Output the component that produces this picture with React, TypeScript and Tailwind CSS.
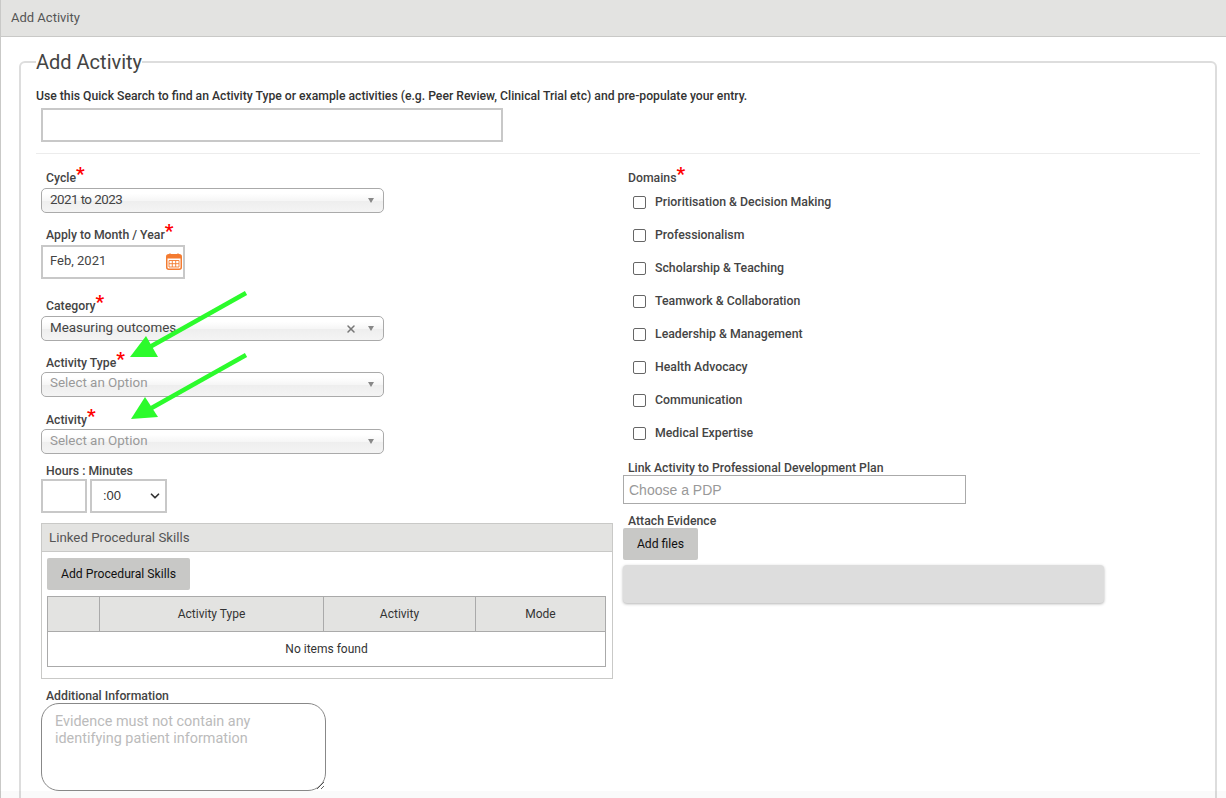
import { ChevronDown, X } from "lucide-react";

const domains = [
  "Prioritisation & Decision Making",
  "Professionalism",
  "Scholarship & Teaching",
  "Teamwork & Collaboration",
  "Leadership & Management",
  "Health Advocacy",
  "Communication",
  "Medical Expertise",
];

function Label({ text, required, className }: { text: string; required?: boolean; className?: string }) {
  return (
    <label className={`block h-[16px] text-[12.25px] leading-[16px] font-medium text-[#444] ${className ?? ""}`}>
      {text}
      {required && (
        <span className="relative top-[-2px] text-[19px] leading-[10px] font-bold text-[#f00]">*</span>
      )}
    </label>
  );
}

function Chosen({ value, placeholder, clearable, className, valueClass }: { value: string; placeholder?: boolean; clearable?: boolean; className?: string; valueClass?: string }) {
  return (
    <div
      className={`flex h-[25px] w-[343px] items-center rounded-[5px] border border-[#aaa] bg-[linear-gradient(#ffffff_20%,#f6f6f6_50%,#eeeeee_52%,#f4f4f4_100%)] pl-[8px] pr-[9px] text-[13.4px] ${placeholder ? "text-[#999]" : "text-[#444]"} ${className ?? ""}`}
    >
      <span className={`flex-1 ${valueClass ?? ""}`}>{value}</span>
      {clearable && <X size={12} strokeWidth={3} className="mr-[11px] text-[#777]" />}
      <span className="h-0 w-0 border-x-[3.5px] border-t-[5px] border-x-transparent border-t-[#888]" />
    </div>
  );
}

function CalendarIcon() {
  return (
    <svg width="16" height="17" viewBox="0 0 16 17" className="mt-[-2px] shrink-0">
      <rect x="0.75" y="1.75" width="14.5" height="14.5" rx="2" fill="#fff" stroke="#f47b30" strokeWidth="1.5" />
      <rect x="1" y="2" width="14" height="3.5" fill="#f47b30" />
      <path d="M4 0.5v3M12 0.5v3" stroke="#f47b30" strokeWidth="1.5" />
      <path d="M3 7.5h10v6.5H3zM3 10.7h10M6.3 7.5v6.5M9.7 7.5v6.5" fill="none" stroke="#f47b30" strokeWidth="0.9" />
    </svg>
  );
}

export default function App() {
  return (
    <div className="relative h-[798px] w-full overflow-hidden bg-white font-['Roboto',sans-serif] text-[#444]">
      <div className="flex h-[37px] items-center border-l border-b border-[#c9c9c7] bg-[#e3e3e1] pl-[10px] text-[13px] text-[#555]">
        Add Activity
      </div>

      <div className="border-l border-[#c9c9c7] pl-[18px] pr-[9px] pt-[14px]">
        <fieldset className="h-[900px] rounded-[6px] border-2 border-[#ddd] pl-[15px] pr-[15px]">
          <legend className="ml-0 h-[22px] pr-0 text-[20px] leading-[22px] text-[#444]">Add Activity</legend>
          <p className="mt-[15px] h-[16px] text-[12.2px] leading-[16px] font-medium text-[#333]">
            Use this Quick Search to find an Activity Type or example activities (e.g. Peer Review, Clinical Trial etc) and pre-populate your entry.
          </p>
          <input className="mt-[4px] ml-[5px] block h-[34px] w-[462px] border-2 border-[#c8c8c8] bg-white" />
          <div className="mt-[11px] h-px bg-[#ececec]" />

          <div className="flex">
            <div className="ml-[5px] w-[572px] shrink-0">
              <Label text="Cycle" required className="mt-[16px] pl-[5px]" />
              <Chosen value="2021 to 2023" valueClass="tracking-[-0.55px]" className="mt-[2px]" />

              <Label text="Apply to Month / Year" required className="mt-[14px] pl-[5px]" />
              <div className="mt-[2px] flex h-[34px] w-[144px] items-center border-2 border-[#c8c8c8] pl-[7px] pr-[1px] text-[13px] text-[#444]">
                <span className="flex-1 pb-[2px]">Feb, 2021</span>
                <CalendarIcon />
              </div>

              <Label text="Category" required className="mt-[19px] pl-[5px]" />
              <Chosen value="Measuring outcomes" clearable className="mt-[2px]" />

              <Label text="Activity Type" required className="mt-[14px] pl-[5px]" />
              <Chosen value="Select an Option" placeholder valueClass="pb-[3px]" className="mt-[1px]" />

              <Label text="Activity" required className="mt-[15px] pl-[5px]" />
              <Chosen value="Select an Option" placeholder className="mt-[1px]" />

              <Label text="Hours : Minutes" className="mt-[9px] pl-[5px]" />
              <div className="flex gap-[3px]">
                <input className="h-[34px] w-[46px] border-2 border-[#c8c8c8] bg-white" />
                <div className="flex h-[34px] w-[77px] items-center border-2 border-[#c8c8c8] pl-[11px] pr-[3px] font-['Liberation_Sans',sans-serif] text-[13px] text-[#333]">
                  <span className="flex-1">:00</span>
                  <ChevronDown size={14} strokeWidth={3} className="text-[#333]" />
                </div>
              </div>

              <div className="mt-[10px] h-[156px] border border-[#c9c9c7]">
                <div className="flex h-[28px] items-center border-b border-[#c9c9c7] bg-[#e3e3e1] pl-[7px] text-[13.3px] text-[#555]">
                  Linked Procedural Skills
                </div>
                <button className="mt-[6px] ml-[5px] block h-[32px] w-[143px] rounded-[2px] bg-[#c8c8c6] text-[12.2px] text-[#111]">
                  Add Procedural Skills
                </button>
                <div className="mt-[6px] ml-[5px] w-[559px] border border-[#aaa] text-[12px] text-[#333]">
                  <div className="grid h-[35px] grid-cols-[51px_224px_152px_1fr] border-b border-[#aaa] bg-[#e3e3e1]">
                    <div />
                    <div className="flex items-center justify-center border-l border-[#aaa]">Activity Type</div>
                    <div className="flex items-center justify-center border-l border-[#aaa]">Activity</div>
                    <div className="flex items-center justify-center border-l border-[#aaa]">Mode</div>
                  </div>
                  <div className="flex h-[34px] items-center justify-center">No items found</div>
                </div>
              </div>

              <Label text="Additional Information" className="mt-[9px] pl-[5px]" />
              <textarea
                placeholder={"Evidence must not contain any identifying patient information"}
                className="-mt-px block h-[88px] w-[285px] rounded-[18px] border border-[#888] px-[13px] pt-[9px] text-[14.4px] leading-[17px] placeholder:text-[#bbb]"
              />
            </div>

            <div className="ml-[10px] flex-1">
              <Label text="Domains" required className="mt-[16px] pl-[5px]" />
              <div className="ml-[10px]">
                {domains.map((d) => (
                  <label key={d} className="flex h-[33px] items-center gap-[9px] text-[12.3px] font-medium text-[#444]">
                    <input type="checkbox" className="h-[13px] w-[13px] appearance-none rounded-[2px] border border-[#666] bg-white" />
                    {d}
                  </label>
                ))}
              </div>
              <Label text="Link Activity to Professional Development Plan" className="mt-[10px] pl-[5px]" />
              <input
                placeholder="Choose a PDP"
                className="-mt-px block h-[29px] w-[343px] border border-[#aaa] px-[5px] font-['Liberation_Sans',sans-serif] text-[14px] placeholder:text-[#999]"
              />
              <Label text="Attach Evidence" className="mt-[9px] pl-[5px]" />
              <button className="-mt-px block h-[32px] w-[75px] rounded-[2px] bg-[#c8c8c6] text-[12.2px] text-[#111]">Add files</button>
              <div className="mt-[5px] h-[38px] w-[481px] rounded-[4px] bg-[#ddd] shadow-[0_1px_3px_rgba(0,0,0,0.3)]" />
            </div>
          </div>
        </fieldset>
      </div>

      <svg className="pointer-events-none absolute left-0 top-0" width="1226" height="798">
        <path d="M246 293 L148 348" stroke="#2cfb2c" strokeWidth="4.5" />
        <path d="M130 357 L146 336 L158 357 Z" fill="#2cfb2c" />
        <path d="M246 355 L148 410" stroke="#2cfb2c" strokeWidth="4.5" />
        <path d="M131 419 L145 397 L158 417 Z" fill="#2cfb2c" />
      </svg>
      <div className="pointer-events-none absolute inset-x-0 bottom-0 h-[7px] bg-black/[0.02]" />
    </div>
  );
}
